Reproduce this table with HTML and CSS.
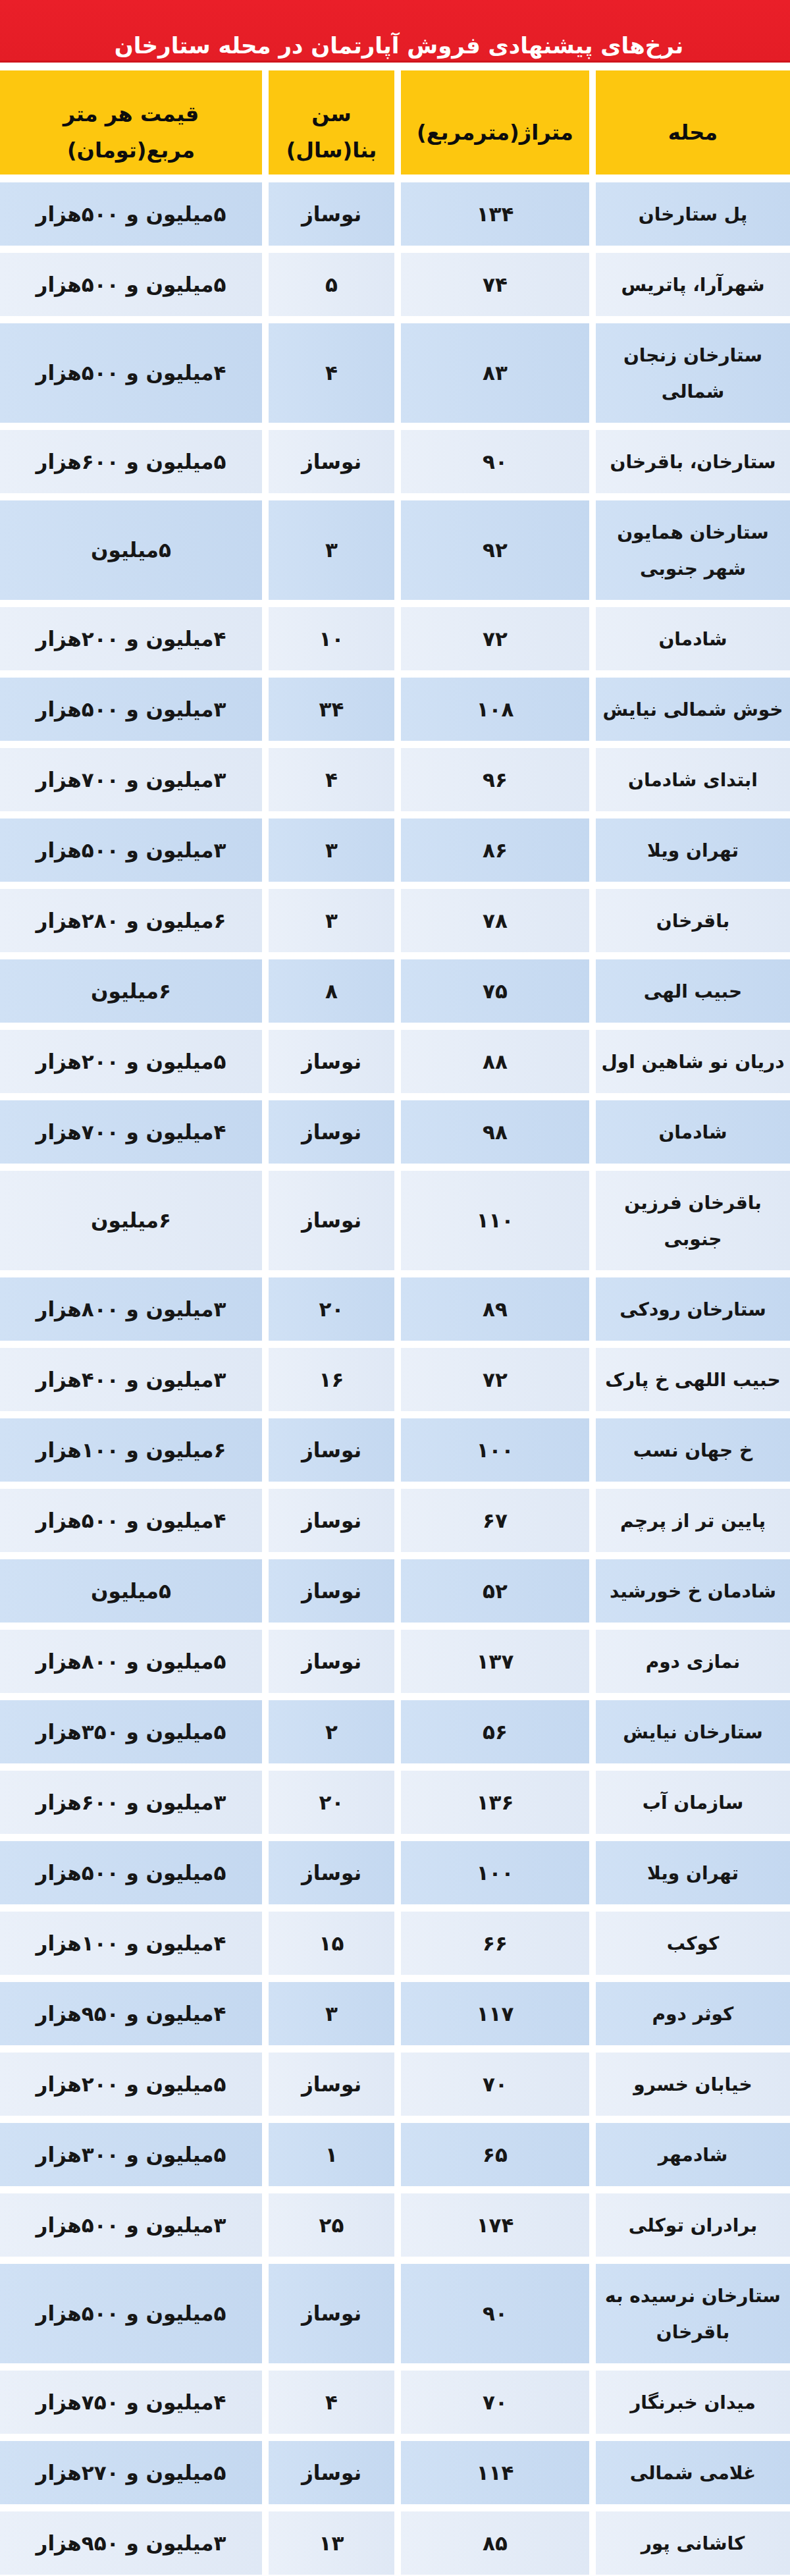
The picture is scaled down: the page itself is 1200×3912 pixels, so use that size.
FILE: index.html
```html
<!DOCTYPE html>
<html lang="fa" dir="rtl">
<head>
<meta charset="utf-8">
<title>نرخ‌های پیشنهادی فروش آپارتمان در محله ستارخان</title>
<link rel="stylesheet" href="styles.css">
</head>
<body>
<div class="page">
  <header class="title-bar">
    <h1 class="title">نرخ‌های پیشنهادی فروش آپارتمان در محله ستارخان</h1>
  </header>
  <div class="table">
    <div class="row head">
      <div class="cell">محله</div>
      <div class="cell">متراژ(مترمربع)</div>
      <div class="cell">سن<br>بنا(سال)</div>
      <div class="cell">قیمت هر متر<br>مربع(تومان)</div>
    </div>
    <div class="row"><div class="cell">پل ستارخان</div><div class="cell">۱۳۴</div><div class="cell">نوساز</div><div class="cell">۵میلیون و ۵۰۰هزار</div></div>
    <div class="row"><div class="cell">شهرآرا، پاتریس</div><div class="cell">۷۴</div><div class="cell">۵</div><div class="cell">۵میلیون و ۵۰۰هزار</div></div>
    <div class="row"><div class="cell">ستارخان زنجان<br>شمالی</div><div class="cell">۸۳</div><div class="cell">۴</div><div class="cell">۴میلیون و ۵۰۰هزار</div></div>
    <div class="row"><div class="cell">ستارخان، باقرخان</div><div class="cell">۹۰</div><div class="cell">نوساز</div><div class="cell">۵میلیون و ۶۰۰هزار</div></div>
    <div class="row"><div class="cell">ستارخان همایون<br>شهر جنوبی</div><div class="cell">۹۲</div><div class="cell">۳</div><div class="cell">۵میلیون</div></div>
    <div class="row"><div class="cell">شادمان</div><div class="cell">۷۲</div><div class="cell">۱۰</div><div class="cell">۴میلیون و ۲۰۰هزار</div></div>
    <div class="row"><div class="cell">خوش شمالی نیایش</div><div class="cell">۱۰۸</div><div class="cell">۳۴</div><div class="cell">۳میلیون و ۵۰۰هزار</div></div>
    <div class="row"><div class="cell">ابتدای شادمان</div><div class="cell">۹۶</div><div class="cell">۴</div><div class="cell">۳میلیون و ۷۰۰هزار</div></div>
    <div class="row"><div class="cell">تهران ویلا</div><div class="cell">۸۶</div><div class="cell">۳</div><div class="cell">۳میلیون و ۵۰۰هزار</div></div>
    <div class="row"><div class="cell">باقرخان</div><div class="cell">۷۸</div><div class="cell">۳</div><div class="cell">۶میلیون و ۲۸۰هزار</div></div>
    <div class="row"><div class="cell">حبیب الهی</div><div class="cell">۷۵</div><div class="cell">۸</div><div class="cell">۶میلیون</div></div>
    <div class="row"><div class="cell">دریان نو شاهین اول</div><div class="cell">۸۸</div><div class="cell">نوساز</div><div class="cell">۵میلیون و ۲۰۰هزار</div></div>
    <div class="row"><div class="cell">شادمان</div><div class="cell">۹۸</div><div class="cell">نوساز</div><div class="cell">۴میلیون و ۷۰۰هزار</div></div>
    <div class="row"><div class="cell">باقرخان فرزین<br>جنوبی</div><div class="cell">۱۱۰</div><div class="cell">نوساز</div><div class="cell">۶میلیون</div></div>
    <div class="row"><div class="cell">ستارخان رودکی</div><div class="cell">۸۹</div><div class="cell">۲۰</div><div class="cell">۳میلیون و ۸۰۰هزار</div></div>
    <div class="row"><div class="cell">حبیب اللهی خ پارک</div><div class="cell">۷۲</div><div class="cell">۱۶</div><div class="cell">۳میلیون و ۴۰۰هزار</div></div>
    <div class="row"><div class="cell">خ جهان نسب</div><div class="cell">۱۰۰</div><div class="cell">نوساز</div><div class="cell">۶میلیون و ۱۰۰هزار</div></div>
    <div class="row"><div class="cell">پایین تر از پرچم</div><div class="cell">۶۷</div><div class="cell">نوساز</div><div class="cell">۴میلیون و ۵۰۰هزار</div></div>
    <div class="row"><div class="cell">شادمان خ خورشید</div><div class="cell">۵۲</div><div class="cell">نوساز</div><div class="cell">۵میلیون</div></div>
    <div class="row"><div class="cell">نمازی دوم</div><div class="cell">۱۳۷</div><div class="cell">نوساز</div><div class="cell">۵میلیون و ۸۰۰هزار</div></div>
    <div class="row"><div class="cell">ستارخان نیایش</div><div class="cell">۵۶</div><div class="cell">۲</div><div class="cell">۵میلیون و ۳۵۰هزار</div></div>
    <div class="row"><div class="cell">سازمان آب</div><div class="cell">۱۳۶</div><div class="cell">۲۰</div><div class="cell">۳میلیون و ۶۰۰هزار</div></div>
    <div class="row"><div class="cell">تهران ویلا</div><div class="cell">۱۰۰</div><div class="cell">نوساز</div><div class="cell">۵میلیون و ۵۰۰هزار</div></div>
    <div class="row"><div class="cell">کوکب</div><div class="cell">۶۶</div><div class="cell">۱۵</div><div class="cell">۴میلیون و ۱۰۰هزار</div></div>
    <div class="row"><div class="cell">کوثر دوم</div><div class="cell">۱۱۷</div><div class="cell">۳</div><div class="cell">۴میلیون و ۹۵۰هزار</div></div>
    <div class="row"><div class="cell">خیابان خسرو</div><div class="cell">۷۰</div><div class="cell">نوساز</div><div class="cell">۵میلیون و ۲۰۰هزار</div></div>
    <div class="row"><div class="cell">شادمهر</div><div class="cell">۶۵</div><div class="cell">۱</div><div class="cell">۵میلیون و ۳۰۰هزار</div></div>
    <div class="row"><div class="cell">برادران توکلی</div><div class="cell">۱۷۴</div><div class="cell">۲۵</div><div class="cell">۳میلیون و ۵۰۰هزار</div></div>
    <div class="row"><div class="cell">ستارخان نرسیده به<br>باقرخان</div><div class="cell">۹۰</div><div class="cell">نوساز</div><div class="cell">۵میلیون و ۵۰۰هزار</div></div>
    <div class="row"><div class="cell">میدان خبرنگار</div><div class="cell">۷۰</div><div class="cell">۴</div><div class="cell">۴میلیون و ۷۵۰هزار</div></div>
    <div class="row"><div class="cell">غلامی شمالی</div><div class="cell">۱۱۴</div><div class="cell">نوساز</div><div class="cell">۵میلیون و ۲۷۰هزار</div></div>
    <div class="row"><div class="cell">کاشانی پور</div><div class="cell">۸۵</div><div class="cell">۱۳</div><div class="cell">۳میلیون و ۹۵۰هزار</div></div>
  </div>
</div>
</body>
</html>
```

FILE: styles.css
```css
html, body {
  margin: 0;
  padding: 0;
  background: #ffffff;
}

body {
  font-family: "DejaVu Sans", "Noto Sans", sans-serif;
  color: #161616;
}

.page {
  width: 1200px;
}

.title-bar {
  height: 92px;
  background: linear-gradient(to bottom, #ea1f29 0%, #e41d26 100%);
  border-bottom: 3px solid #cf141c;
  display: flex;
  justify-content: center;
  align-items: flex-end;
}

.title {
  margin: 0 0 -2px 12px;
  color: #ffffff;
  font-size: 34px;
  font-weight: bold;
  line-height: 50px;
  white-space: nowrap;
}

.table {
  margin-top: 12px;
  display: flex;
  flex-direction: column;
  gap: 11px;
}

.row {
  display: grid;
  grid-template-columns: 295px 286px 191px 398px;
  column-gap: 10px;
}

.cell {
  display: flex;
  align-items: center;
  justify-content: center;
  text-align: center;
  padding: 20.5px 2px;
  font-size: 31px;
  font-weight: bold;
  line-height: 55px;
  white-space: nowrap;
}

.row .cell:first-child {
  font-size: 28px;
}

.row:nth-child(even) .cell {
  background: linear-gradient(to right, #d0e1f5 0%, #c4d8f0 100%);
}

.row:nth-child(odd) .cell {
  background: linear-gradient(to right, #eaf0f9 0%, #dfe8f5 100%);
}

.row.head {
  margin-bottom: 1px;
}

.row.head .cell {
  background: #fdc70f;
  color: #0d0d0d;
  padding: 39px 2px 9px;
  height: 110px;
  font-size: 32px;
}

.row.head .cell:first-child {
  font-size: 32px;
}
```
